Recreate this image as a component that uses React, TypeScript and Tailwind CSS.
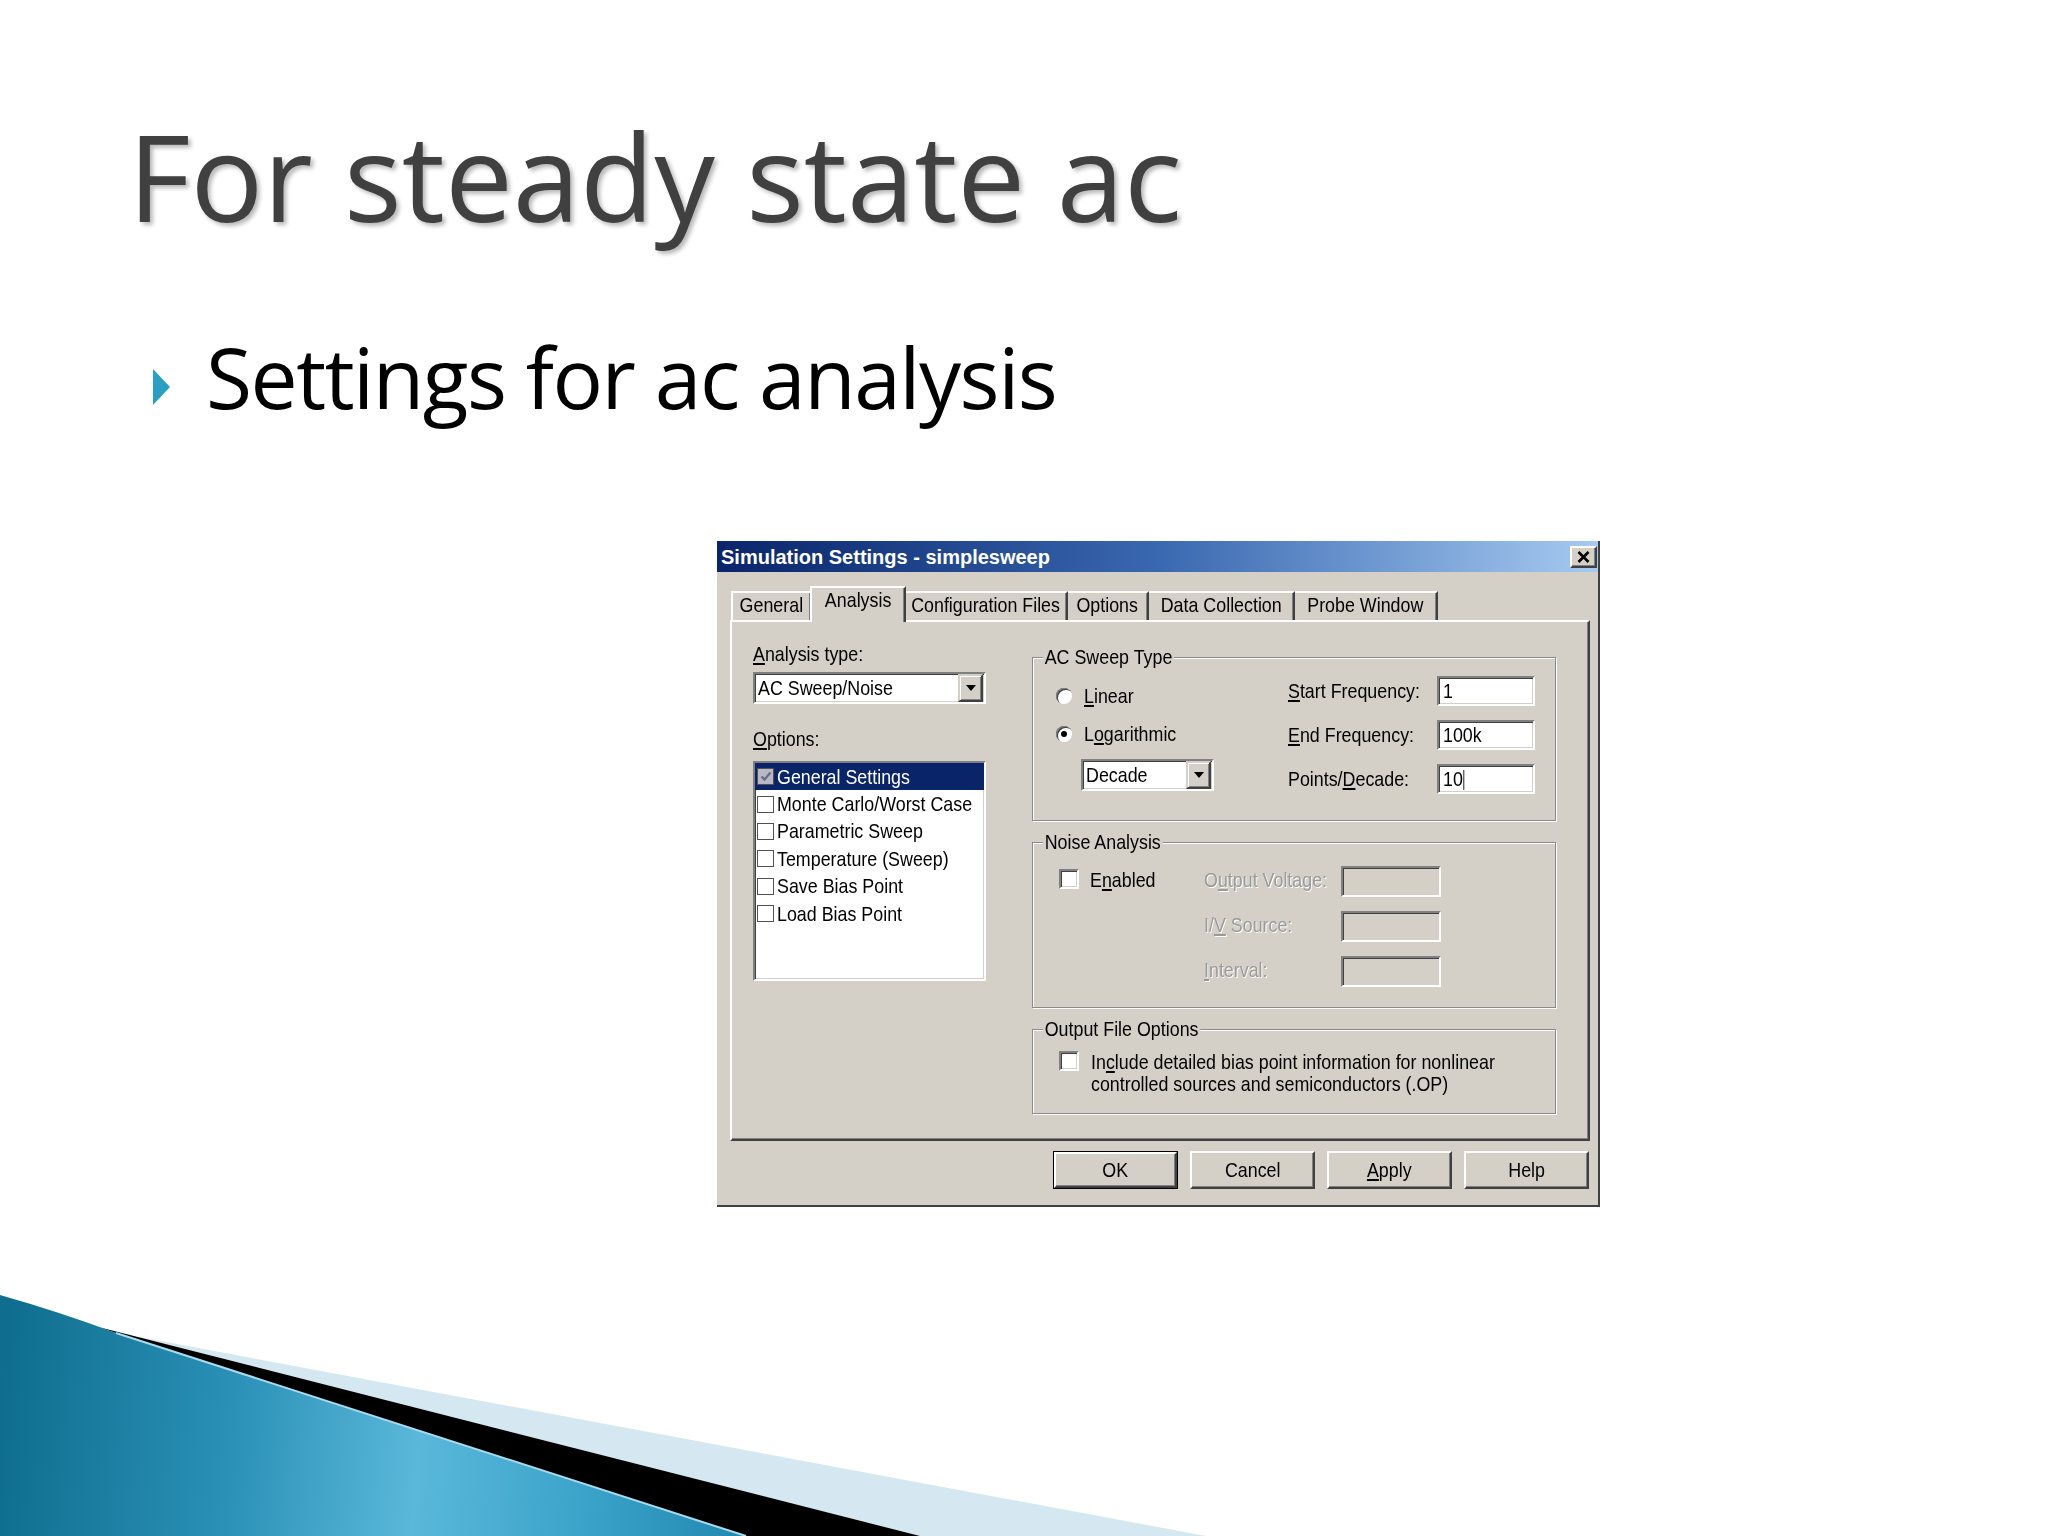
import React from "react";

const SUNKEN =
  "border-2 border-t-[#808080] border-l-[#808080] border-r-white border-b-white shadow-[inset_1px_1px_0_#404040,inset_-1px_-1px_0_#d4d0c8]";
const RAISED =
  "border-2 border-t-white border-l-white border-r-[#404040] border-b-[#404040] shadow-[inset_-1px_-1px_0_#808080]";

/* condensed text: the screenshot's MS Sans Serif is narrower than Arial */
function T({ children, className = "" }: { children: React.ReactNode; className?: string }) {
  return <span className={`inline-block whitespace-nowrap origin-left scale-x-[0.85] ${className}`}>{children}</span>;
}
function TC({ children, className = "" }: { children: React.ReactNode; className?: string }) {
  return <span className={`inline-block whitespace-nowrap origin-center scale-x-[0.85] ${className}`}>{children}</span>;
}
function U({ children }: { children: React.ReactNode }) {
  return <span className="underline underline-offset-2">{children}</span>;
}

function DropBtn() {
  return (
    <div className="w-[25px] h-full bg-[#d4d0c8] border-2 border-t-[#d4d0c8] border-l-[#d4d0c8] border-r-[#404040] border-b-[#404040] shadow-[inset_1px_1px_0_#fff,inset_-1px_-1px_0_#808080] flex items-center justify-center">
      <svg width="10" height="6" viewBox="0 0 10 6">
        <path d="M0 0H10L5 6Z" fill="#000" />
      </svg>
    </div>
  );
}

function Check3D() {
  return <div className={`w-[20px] h-[20px] shrink-0 bg-white ${SUNKEN}`} />;
}

function ListCheck({ checked }: { checked?: boolean }) {
  return (
    <div
      className={`w-[17px] h-[17px] shrink-0 border border-[#505050] flex items-center justify-center ${
        checked ? "bg-[#b9b9c6]" : "bg-white"
      }`}
    >
      {checked && (
        <svg width="12" height="11" viewBox="0 0 12 11">
          <path d="M1.5 5.5L4.5 8.5L10.5 1.5" stroke="#6d6d80" strokeWidth="2.4" fill="none" />
        </svg>
      )}
    </div>
  );
}

function Radio({ checked, children, className = "" }: { checked?: boolean; children: React.ReactNode; className?: string }) {
  return (
    <div className={`h-[30px] flex items-center ${className}`}>
      <div className="w-[16px] h-[16px] rounded-full bg-white shadow-[inset_1px_1px_0_#808080,inset_2px_2px_0_#404040] flex items-center justify-center shrink-0">
        {checked && <div className="w-[6px] h-[6px] rounded-full bg-black" />}
      </div>
      <T className="ml-[12px]">{children}</T>
    </div>
  );
}

function Group({ title, className = "", children }: { title: string; className?: string; children?: React.ReactNode }) {
  return (
    <div className={`relative border border-[#8a8a8a] shadow-[inset_1px_1px_0_#fff,1px_1px_0_#fff] ${className}`}>
      <div className="absolute -top-[13px] left-[10px] leading-[24px]">
        <T className="px-[2px] bg-[#d4d0c8]">{title}</T>
      </div>
      {children}
    </div>
  );
}

function Field({ value, caret }: { value?: string; caret?: boolean }) {
  return (
    <div className={`h-[30px] ${SUNKEN} bg-white flex items-center pl-[4px] leading-[24px]`}>
      <T>
        {value}
        {caret && <span className="inline-block w-[1px] h-[20px] bg-black ml-[1px] align-middle" />}
      </T>
    </div>
  );
}

function Btn({ children, def }: { children: React.ReactNode; def?: boolean }) {
  if (def) {
    return (
      <div className="w-[125px] h-[38px] border border-black">
        <div className={`w-full h-full ${RAISED} flex items-center justify-center`}>
          <TC>{children}</TC>
        </div>
      </div>
    );
  }
  return (
    <div className={`w-[125px] h-[38px] ${RAISED} flex items-center justify-center`}>
      <TC>{children}</TC>
    </div>
  );
}

const DIS = "text-[#9a9a9a] [text-shadow:1px_1px_0_#fff]";

function Dialog() {
  return (
    <div className="ml-[717px] mt-[122px] w-[883px] h-[666px] bg-[#d4d0c8] border-r-2 border-b-2 border-[#404040] flex flex-col font-['Liberation_Sans',sans-serif] text-[21px] leading-[24px] text-black">
      {/* title bar */}
      <div className="h-[31px] shrink-0 flex items-center justify-between pl-[4px] pr-[1px] bg-linear-to-r from-[#0a246a] via-[#3a68b0] to-[#a6caf0]">
        <span className="font-bold text-[20px] text-white leading-[24px] whitespace-nowrap">
          Simulation Settings - simplesweep
        </span>
        <div className={`w-[27px] h-[22px] bg-[#d4d0c8] ${RAISED} flex items-center justify-center`}>
          <svg width="13" height="12" viewBox="0 0 13 12">
            <path d="M1.5 1L11.5 11M11.5 1L1.5 11" stroke="#000" strokeWidth="2.6" />
          </svg>
        </div>
      </div>

      {/* tabs */}
      <div className="relative z-10 ml-[14px] mt-[14px] h-[34px] flex items-end">
        <div className="w-[81px] h-[29px] border-t-2 border-l-2 border-t-white border-l-white border-r-2 border-r-[#404040] shadow-[inset_-1px_0_0_#808080] flex justify-center">
          <TC>General</TC>
        </div>
        <div className="w-[96px] h-[36px] -mb-[2px] -ml-[2px] bg-[#d4d0c8] border-t-2 border-l-2 border-t-white border-l-white border-r-2 border-r-[#404040] shadow-[inset_-1px_0_0_#808080] flex justify-center">
          <TC>Analysis</TC>
        </div>
        <div className="w-[162px] h-[29px] border-t-2 border-t-white border-r-2 border-r-[#404040] shadow-[inset_-1px_0_0_#808080] flex justify-center">
          <TC>Configuration Files</TC>
        </div>
        <div className="w-[81px] h-[29px] border-t-2 border-t-white border-r-2 border-r-[#404040] shadow-[inset_-1px_0_0_#808080] flex justify-center">
          <TC>Options</TC>
        </div>
        <div className="w-[146px] h-[29px] border-t-2 border-t-white border-r-2 border-r-[#404040] shadow-[inset_-1px_0_0_#808080] flex justify-center">
          <TC>Data Collection</TC>
        </div>
        <div className="w-[143px] h-[29px] border-t-2 border-t-white border-r-2 border-r-[#404040] shadow-[inset_-1px_0_0_#808080] flex justify-center">
          <TC>Probe Window</TC>
        </div>
      </div>

      {/* panel */}
      <div className={`ml-[13px] w-[860px] h-[521px] shrink-0 ${RAISED} flex pl-[21px]`}>
        {/* left column */}
        <div className="w-[233px] pt-[22px] flex flex-col">
          <div className="leading-[20px]">
            <T>
              <U>A</U>nalysis type:
            </T>
          </div>
          <div className={`mt-[8px] h-[32px] bg-white ${SUNKEN} flex`}>
            <span className="flex-1 pl-[3px] leading-[28px] overflow-hidden">
              <T>AC Sweep/Noise</T>
            </span>
            <div className="h-full pr-[1px]">
              <DropBtn />
            </div>
          </div>
          <div className="leading-[20px] mt-[25px]">
            <T>
              <U>O</U>ptions:
            </T>
          </div>
          <div className={`mt-[12px] h-[220px] bg-white ${SUNKEN} flex flex-col overflow-hidden`}>
            {[
              "General Settings",
              "Monte Carlo/Worst Case",
              "Parametric Sweep",
              "Temperature (Sweep)",
              "Save Bias Point",
              "Load Bias Point",
            ].map((t, i) => (
              <div
                key={t}
                className={`h-[27.4px] shrink-0 flex items-center pl-[2px] ${i === 0 ? "bg-[#0a246a] text-white" : ""}`}
              >
                <ListCheck checked={i === 0} />
                <T className="ml-[3px]">{t}</T>
              </div>
            ))}
          </div>
        </div>

        {/* right column */}
        <div className="ml-[46px] w-[524px] pt-[35px] flex flex-col">
          <Group title="AC Sweep Type" className="h-[164px] flex">
            <div className="pl-[23px] pt-[23px] flex flex-col">
              <Radio>
                <U>L</U>inear
              </Radio>
              <Radio checked className="mt-[8px]">
                L<U>o</U>garithmic
              </Radio>
              <div className={`ml-[25px] mt-[10px] w-[133px] h-[32px] bg-white ${SUNKEN} flex`}>
                <span className="flex-1 pl-[3px] leading-[28px] overflow-hidden">
                  <T>Decade</T>
                </span>
                <div className="h-full pr-[1px]">
                  <DropBtn />
                </div>
              </div>
            </div>
            <div className="ml-auto mr-[20px] pt-[18px] grid grid-cols-[149px_98px] gap-y-[14px] items-center h-fit">
              <T>
                <U>S</U>tart Frequency:
              </T>
              <Field value="1" />
              <T>
                <U>E</U>nd Frequency:
              </T>
              <Field value="100k" />
              <T>
                Points/<U>D</U>ecade:
              </T>
              <Field value="10" caret />
            </div>
          </Group>

          <Group title="Noise Analysis" className="mt-[21px] h-[166px]">
            <div className="flex pt-[23px] pl-[26px]">
              <div className="w-[145px] h-[31px] flex items-start pt-[3px]">
                <Check3D />
                <T className="ml-[11px] -mt-[1px]">
                  E<U>n</U>abled
                </T>
              </div>
              <div className="grid grid-cols-[137px_100px] gap-y-[14px] items-center">
                <T className={`${DIS} -mt-[3px]`}>
                  O<U>u</U>tput Voltage:
                </T>
                <div className={`h-[31px] ${SUNKEN} bg-[#d4d0c8]`} />
                <T className={`${DIS} -mt-[3px]`}>
                  I/<U>V</U> Source:
                </T>
                <div className={`h-[31px] ${SUNKEN} bg-[#d4d0c8]`} />
                <T className={`${DIS} -mt-[3px]`}>
                  <U>I</U>nterval:
                </T>
                <div className={`h-[31px] ${SUNKEN} bg-[#d4d0c8]`} />
              </div>
            </div>
          </Group>

          <Group title="Output File Options" className="mt-[21px] h-[85px]">
            <div className="flex pt-[21px] pl-[26px] items-start">
              <Check3D />
              <div className="ml-[12px] leading-[22px] flex flex-col items-start">
                <T>
                  In<U>c</U>lude detailed bias point information for nonlinear
                </T>
                <T>controlled sources and semiconductors (.OP)</T>
              </div>
            </div>
          </Group>
        </div>
      </div>

      {/* buttons */}
      <div className="mt-[10px] flex justify-end gap-[12px] pr-[9px]">
        <Btn def>OK</Btn>
        <Btn>Cancel</Btn>
        <Btn>
          <U>A</U>pply
        </Btn>
        <Btn>Help</Btn>
      </div>
    </div>
  );
}

function Swoosh() {
  return (
    <svg className="absolute left-0 bottom-0" width="1300" height="256" viewBox="0 1280 1300 256">
      <defs>
        <linearGradient id="bl" x1="0" y1="1420" x2="760" y2="1480" gradientUnits="userSpaceOnUse">
          <stop offset="0" stopColor="#0f6e8f" />
          <stop offset="0.3" stopColor="#2a90b6" />
          <stop offset="0.55" stopColor="#5ab8da" />
          <stop offset="0.78" stopColor="#3aa2c9" />
          <stop offset="1" stopColor="#1f86ae" />
        </linearGradient>
      </defs>
      <path d="M118 1333 L1206 1536 L920 1536 L130 1335 Z" fill="#d5e8f1" />
      <path d="M98 1327 Q114 1331 130 1335 L920 1536 L746 1536 L116 1333 Z" fill="#000" />
      <path d="M0 1295 Q60 1312 116 1333 L746 1536 L0 1536 Z" fill="url(#bl)" />
      <path d="M116 1333 L746 1536" stroke="#a6dcee" strokeWidth="2" />
    </svg>
  );
}

export default function App() {
  return (
    <div className="relative w-[2048px] h-[1536px] overflow-hidden bg-white flex flex-col">
      <h1 className="ml-[128px] mt-[115px] text-[121px] leading-none font-['Open_Sans',sans-serif] text-[#404040] [text-shadow:3px_3px_4px_rgba(0,0,0,0.28)] whitespace-nowrap">
        For steady state ac
      </h1>
      <div className="ml-[153px] mt-[99px] flex items-start">
        <svg width="17" height="36" viewBox="0 0 17 36" className="mt-[34px] shrink-0">
          <path d="M0 0L17 18L0 36Z" fill="#2a9fc4" />
        </svg>
        <div className="ml-[36px] text-[84px] leading-none font-['Open_Sans',sans-serif] text-black tracking-[-1.5px] whitespace-nowrap">
          Settings for ac analysis
        </div>
      </div>
      <Dialog />
      <Swoosh />
    </div>
  );
}
